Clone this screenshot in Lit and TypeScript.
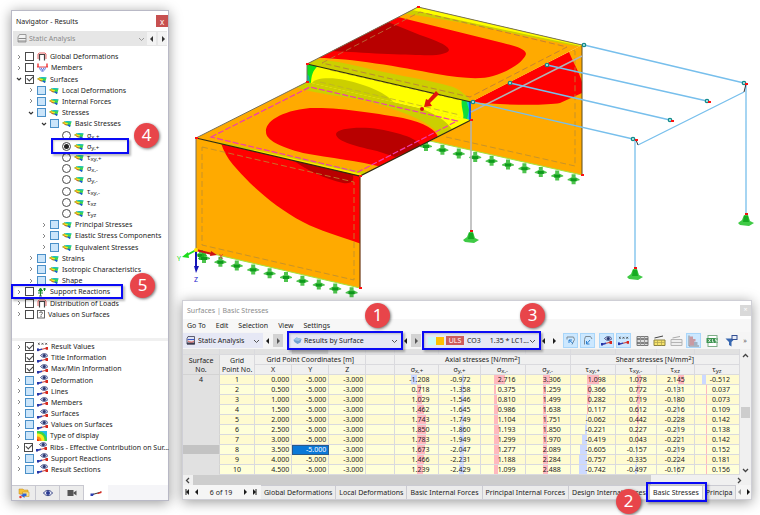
import { LitElement, html, svg, css, nothing, type TemplateResult } from "lit";
import { customElement, state } from "lit/decorators.js";
import { classMap } from "lit/directives/class-map.js";
import { styleMap } from "lit/directives/style-map.js";

const shared = css`
  * { box-sizing: border-box; }
  button, select, input {
    font: inherit;
    color: inherit;
    margin: 0;
    padding: 0;
    border: 0;
    background: none;
    border-radius: 0;
  }
  svg { display: block; flex: none; }
  .badge {
    position: absolute;
    z-index: 5;
    width: 25px;
    height: 25px;
    border-radius: 50%;
    background: #e8454a;
    color: #fff;
    font-size: 17px;
    line-height: 24px;
    text-align: center;
    box-shadow: 1px 1px 3px #0008;
  }
  .mark {
    position: absolute;
    z-index: 4;
    border: 2px solid #0a0af5;
    box-shadow: 2px 2px 2px #0004, inset 1px 1px 2px #0003;
    pointer-events: none;
  }
`;

/* ---------- icons ---------- */

const icons: Record<string, TemplateResult> = {
  surface: html`<svg width="10" height="9" viewBox="0 0 20 18">
    <path d="M0 8 6 4V6L10 4 19 5 18 9 16 16 11 13 6 12V11Z" fill="#3fd64a" />
    <path d="M6 4V6L10 4 19 5 18 7 8 6Z" fill="#17b8d8" /><path d="M0 8 6 5 7 11Z" fill="#f2a01e" />
    <path d="M5 7 12 8 11 11 6 10Z" fill="#f1e62a" /><path d="M4 10 9 11 11 13 6 12Z" fill="#ee3c1c" />
    <path d="M11 11 17 12 16 16 11 13Z" fill="#1c52e0" />
  </svg>`,
  frame: html`<svg width="10" height="9" viewBox="0 0 20 18">
    <path d="M5 17V5H15V17" fill="none" stroke="#444" stroke-width="2.4" />
    <path d="M2 14V4L5 2H16L18 4V14" fill="none" stroke="#d22" stroke-width="1.4" />
  </svg>`,
  members: html`<svg width="11" height="9" viewBox="0 0 22 18">
    <path d="M2 1V8M20 1V8" stroke="#e11" stroke-width="2.4" /><path d="M0 8H22" stroke="#e11" stroke-width="1.6" />
    <path d="M5 9C7 19 15 19 17 9M8 9 11 15 14 9" fill="none" stroke="#3a5ad6" stroke-width="1.6" />
  </svg>`,
  reactions: html`<svg width="10" height="10" viewBox="0 0 20 20">
    <path d="M7 17V4M3 8 7 2 11 8ZM2 12H12M15 8V2M12 4H18" stroke="#168a2b" fill="#168a2b" stroke-width="2" />
    <path d="M4 19H10L7 14Z" fill="#2a6b34" />
  </svg>`,
  query: html`<svg width="8" height="9" viewBox="0 0 16 18">
    <rect x="1" y="1" width="14" height="15" fill="#fff" stroke="#555" stroke-width="1.8" />
    <path d="M5 6C5 3 11 3 11 6 11 8 8 8 8 11M8 12V14" fill="none" stroke="#444" stroke-width="1.8" />
  </svg>`,
  eyeMember: html`<svg width="11" height="10" viewBox="0 0 22 20">
    <path d="M1 17 20 12" stroke="#c9463f" stroke-width="2.4" /><path d="M1 17 10 14.600" stroke="#2b42b5" stroke-width="3" />
    <rect x="0" y="14" width="4" height="5" fill="#2335a8" /><rect x="17" y="10" width="5" height="6" fill="#d9281e" />
    <path d="M7 5C11 0 18 0 22 5 18 10 11 10 7 5Z" fill="#c6cdea" stroke="#27356f" stroke-width="1.6" />
    <circle cx="14.500" cy="5" r="3" fill="#27356f" />
  </svg>`,
  valueMember: html`<svg width="11" height="10" viewBox="0 0 24 20">
    <path d="M2 17 22 12" stroke="#c9463f" stroke-width="2.4" /><path d="M2 17 11 14.600" stroke="#2b42b5" stroke-width="3" />
    <rect x="0" y="13" width="4" height="6" fill="#2335a8" /><rect x="19" y="10" width="5" height="6" fill="#d9281e" />
    <path d="M2 1 6 5M6 1 2 5M10 1 14 5M14 1 10 5M18 1 22 5M22 1 18 5" stroke="#333" stroke-width="1.6" />
  </svg>`,
  spectrum: html`<svg width="10" height="10" viewBox="0 0 20 20">
    <rect width="20" height="20" fill="#1fbfe8" /><path d="M0 0C12 0 20 8 20 20H0Z" fill="#3fd640" />
    <path d="M0 20V5C10 5 15 10 15 20Z" fill="#f5ef22" /><path d="M0 20V11C6 11 9 14 9 20Z" fill="#ff8a12" />
    <path d="M0 20V16C3 16 4 18 4 20Z" fill="#ef2a10" />
  </svg>`,
  analysis: html`<svg width="10" height="9" viewBox="0 0 20 18">
    <path d="M4 1H17V16H2V5Z" fill="#dfe3f2" stroke="#3c3c50" stroke-width="1.6" />
    <path d="M3 7H17" stroke="#3b57c4" stroke-width="2" /><path d="M2 13H18V17H2Z" fill="#3c3c50" />
    <path d="M4 10C8 13 13 13 16 10" fill="none" stroke="#d32" stroke-width="1.6" />
  </svg>`,
  analysisGrey: html`<svg width="10" height="9" viewBox="0 0 20 18">
    <path d="M5 1H18V16H2V6Z" fill="#f2f2f2" stroke="#888" stroke-width="1.6" />
    <path d="M3 9H18M2 14H18" stroke="#888" stroke-width="2" />
  </svg>`,
  project: html`<svg width="12" height="11" viewBox="0 0 24 22">
    <path d="M2 2H10L12 4H20V12H2Z" fill="#f6c33a" stroke="#c08a1c" />
    <path d="M9 8H22V17H9Z" fill="#ffe48c" stroke="#c08a1c" /><path d="M4 13 13 20V16H17V11H9V14Z" fill="#2e62d9" />
    <circle cx="5" cy="18" r="2.500" fill="#e33" />
  </svg>`,
  eye: html`<svg width="10" height="8" viewBox="0 0 20 16">
    <path d="M1 8C6 1 14 1 19 8 14 15 6 15 1 8Z" fill="#e9ecf8" stroke="#3a4686" stroke-width="2" />
    <circle cx="10" cy="8" r="4" fill="#2a3a92" />
  </svg>`,
  camera: html`<svg width="10" height="8" viewBox="0 0 20 16">
    <rect x="1" y="2" width="12" height="12" fill="#555" /><path d="M13 7 19 3V13L13 9Z" fill="#555" />
  </svg>`,
  member: html`<svg width="12" height="8" viewBox="0 0 24 16">
    <path d="M2 12 22 6" stroke="#333" stroke-width="2" /><path d="M1 14V9L8 9 6 14Z" fill="#2a3db2" /><path d="M14 9 23 4V8L16 10Z" fill="#d9281e" />
  </svg>`,
  layer: html`<svg width="9" height="8" viewBox="0 0 18 16">
    <path d="M1 6 7 1 17 4 15 11 9 14 3 10Z" fill="#6f9fd0" /><path d="M1 6 7 1 17 4 11 8Z" fill="#9cc3e6" />
  </svg>`,
  linkIn: html`<svg width="12" height="12" viewBox="0 0 24 24">
    <path d="M4 9V4H17L19 9 14 19" fill="none" stroke="#7d8a94" stroke-width="2" /><path d="M8 10 16 17M8 10V16M8 10H14" stroke="#2f80d0" stroke-width="2" fill="none" />
  </svg>`,
  linkOut: html`<svg width="12" height="12" viewBox="0 0 24 24">
    <path d="M20 8 17 3H7L5 9V19" fill="none" stroke="#7d8a94" stroke-width="2" /><path d="M16 10 9 18M9 12V18H15" stroke="#2f80d0" stroke-width="2" fill="none" />
  </svg>`,
  rows: html`<svg width="13" height="12" viewBox="0 0 26 24">
    <path d="M2 3H24V21H2Z" fill="#ddd" stroke="#777" stroke-width="2" /><path d="M2 8H24M2 16H24" stroke="#666" stroke-width="3" />
    <path d="M9 3V21M17 3V21" stroke="#999" stroke-width="2" />
  </svg>`,
  rowsYellow: html`<svg width="13" height="12" viewBox="0 0 26 24">
    <path d="M3 6 20 2" stroke="#444" stroke-width="2" /><path d="M2 10H24V21H2Z" fill="#f7e36a" stroke="#8a8140" stroke-width="2" />
    <path d="M2 15H24M9 10V21M17 10V21" stroke="#b3a650" stroke-width="1.500" />
  </svg>`,
  rowsPale: html`<svg width="13" height="12" viewBox="0 0 26 24">
    <path d="M5 6 20 3" stroke="#aaa" stroke-width="2" /><path d="M2 9H24V21H2Z" fill="#eee" stroke="#b5b5b5" stroke-width="2" />
    <path d="M2 15H24" stroke="#b5b5b5" stroke-width="2" />
  </svg>`,
  barChart: html`<svg width="13" height="12" viewBox="0 0 26 24">
    <path d="M4 1V22H24" stroke="#888" stroke-width="2" fill="none" />
    <path d="M5 3H12V8H5ZM5 8H17V13H5ZM5 13H14V21H5Z" fill="#c99aa2" /><path d="M14 14H21V21H14Z" fill="#9fb2c4" />
  </svg>`,
  excel: html`<svg width="13" height="12" viewBox="0 0 26 24">
    <rect x="4" y="1" width="18" height="22" fill="#fff" stroke="#7fae88" stroke-width="2" />
    <rect x="1" y="6" width="22" height="10" fill="#3d9450" /><path d="M5 8 9 14M9 8 5 14M13 8V14H16M22 8H19V11H22V14H19" stroke="#fff" stroke-width="1.400" fill="none" />
  </svg>`,
  filter: html`<svg width="13" height="12" viewBox="0 0 26 24">
    <path d="M1 7H20L13 14V23L8 20V14Z" fill="#3767b0" /><rect x="14" y="1" width="10" height="8" fill="#e8edf8" stroke="#334f93" stroke-width="2" />
  </svg>`,
};

const chevron = (open: boolean) => open
  ? html`<svg width="6" height="6" viewBox="0 0 6 6"><path d="M1 2 3 4 5 2" fill="none" stroke="#333" stroke-width="1.200" /></svg>`
  : html`<svg width="6" height="6" viewBox="0 0 6 6"><path d="M2 1 4 3 2 5" fill="none" stroke="#888" /></svg>`;

const arrow = (dir: "left" | "right", bar = false) => html`<svg width="6" height="6" viewBox="0 0 6 6">
  <path d=${dir === "left" ? "M4 0 1 3 4 6Z" : "M2 0 5 3 2 6Z"} fill="currentColor" />
  ${bar ? svg`<path d=${dir === "left" ? "M1 0V6" : "M5 0V6"} stroke="currentColor" />` : nothing}
</svg>`;

/* ---------- navigator ---------- */

type Check = "off" | "on" | "part" | "radio" | "radio-on";
interface Node {
  text: string;
  sub?: string;
  level: number;
  check: Check;
  icon: string;
  open?: boolean;
  leaf?: boolean;
  callout?: string;
}

const n = (level: number, text: string, check: Check, icon: string, more: Partial<Node> = {}): Node =>
  ({ level, text, check, icon, ...more });
const stress = (text: string, sub: string, more: Partial<Node> = {}) =>
  n(3, text, "radio", "surface", { sub, leaf: true, ...more });

const resultTree: Node[] = [
  n(0, "Global Deformations", "off", "frame"),
  n(0, "Members", "off", "members"),
  n(0, "Surfaces", "on", "surface", { open: true }),
  n(1, "Local Deformations", "part", "surface"),
  n(1, "Internal Forces", "part", "surface"),
  n(1, "Stresses", "part", "surface", { open: true }),
  n(2, "Basic Stresses", "part", "surface", { open: true }),
  stress("σ", "x,+"),
  stress("σ", "y,+", { check: "radio-on", callout: "4" }),
  stress("τ", "xy,+"),
  stress("σ", "x,-"),
  stress("σ", "y,-"),
  stress("τ", "xy,-"),
  stress("τ", "xz"),
  stress("τ", "yz"),
  n(2, "Principal Stresses", "part", "surface"),
  n(2, "Elastic Stress Components", "part", "surface"),
  n(2, "Equivalent Stresses", "part", "surface"),
  n(1, "Strains", "part", "surface"),
  n(1, "Isotropic Characteristics", "part", "surface"),
  n(1, "Shape", "part", "surface"),
  n(0, "Support Reactions", "off", "reactions", { callout: "5" }),
  n(0, "Distribution of Loads", "off", "frame"),
  n(0, "Values on Surfaces", "off", "query"),
];

const displayTree: Node[] = [
  n(0, "Result Values", "on", "valueMember"),
  n(0, "Title Information", "on", "eyeMember", { leaf: true }),
  n(0, "Max/Min Information", "on", "eyeMember", { leaf: true }),
  n(0, "Deformation", "part", "eyeMember"),
  n(0, "Lines", "part", "eyeMember"),
  n(0, "Members", "part", "eyeMember"),
  n(0, "Surfaces", "part", "eyeMember"),
  n(0, "Values on Surfaces", "part", "eyeMember"),
  n(0, "Type of display", "part", "spectrum"),
  n(0, "Ribs - Effective Contribution on Sur...", "on", "eyeMember"),
  n(0, "Support Reactions", "part", "eyeMember"),
  n(0, "Result Sections", "part", "eyeMember"),
];

@customElement("results-navigator")
export class ResultsNavigator extends LitElement {
  static styles = [shared, css`
    :host {
      display: flex;
      flex-direction: column;
      background: #fff;
      border: 1px solid #b9b9c6;
      box-shadow: 0 2px 12px #0006;
    }
    .title { display: flex; align-items: center; height: 20px; padding-left: 4px; }
    h1 { flex: 1; margin: 0; font-size: 7px; font-weight: 400; }
    .close { width: 12px; height: 12px; background: #c75050; color: #fff; font-size: 8px; line-height: 11px; }
    .picker { display: flex; align-items: center; height: 15px; margin: 0 1px; padding-left: 4px; background: #e6e6e6; color: #8a8a8a; gap: 2px; }
    .picker select { flex: 1; min-width: 0; appearance: none; opacity: 1; }
    .picker button { display: grid; place-items: center; width: 9px; height: 13px; background: #f3f3f3; color: #333; }
    ul { display: flex; flex-direction: column; list-style: none; margin: 0; padding: 0; }
    li { position: relative; display: flex; align-items: center; flex: 1 1 0; min-height: 11px; padding-left: 3px; }
    .level-1 { padding-left: 15px; }
    .level-2 { padding-left: 28px; }
    .level-3 { padding-left: 40px; }
    .main-tree { min-height: 269px; margin-top: 5px; }
    .split { height: 3px; margin-top: 18px; background: #f0f0f0; }
    .display-tree { min-height: 134px; }
    .twist { display: grid; place-items: center; width: 7px; height: 9px; margin-right: 3px; }
    .item { display: flex; align-items: center; gap: 3px; line-height: 11px; white-space: nowrap; }
    .item sub { font-size: 6px; line-height: 1; vertical-align: -1px; }
    input { appearance: none; display: grid; place-items: center; width: 9px; height: 9px; border: 1px solid #4a4a4a; background: #fff; }
    input.part { background: #cbe5fa; border-color: #4a90c8; }
    input.on::before { content: ""; width: 5px; height: 3px; border: solid #444; border-width: 0 0 1px 1px; transform: translateY(-1px) rotate(-45deg); }
    input[type="radio"] { border-radius: 50%; }
    input.radio-on::before { content: ""; width: 5px; height: 5px; border-radius: 50%; background: #222; }
    .tabs { display: flex; height: 15px; margin-top: 10px; background: #f5f5f8; }
    .tabs button { display: grid; place-items: center; flex: 0 0 24px; border: solid #c8c8d0; border-width: 1px 1px 0 0; background: #ececec; }
    .tabs .active { background: #fff; border-color: #fff; }
    .mark-4 { left: 39px; right: 39px; top: -3px; bottom: -2px; }
    .mark-5 { left: -1px; right: 45px; top: -2px; bottom: -2px; }
    .badge-4 { right: 9px; top: -18px; }
    .badge-5 { right: 13px; top: -13px; }
  `];

  private row = (node: Node) => {
    const radio = node.check.startsWith("radio");
    return html`<li class="level-${node.level}">
      ${node.leaf
        ? html`<span class="twist"></span>`
        : html`<button class="twist" aria-label="Expand ${node.text}">${chevron(!!node.open)}</button>`}
      <label class="item">
        <input class=${node.check} type=${radio ? "radio" : "checkbox"} name=${radio ? "stress" : nothing}
          .checked=${node.check.endsWith("on")} />
        ${icons[node.icon]}
        <span>${node.text}${node.sub ? html`<sub>${node.sub}</sub>` : nothing}</span>
      </label>
      ${node.callout
        ? html`<span class="mark mark-${node.callout}"></span><span class="badge badge-${node.callout}">${node.callout}</span>`
        : nothing}
    </li>`;
  };

  render() {
    return html`
      <header class="title"><h1>Navigator - Results</h1><button class="close" aria-label="Close navigator">x</button></header>
      <div class="picker">
        ${icons.analysisGrey}
        <select aria-label="Analysis type"><option>Static Analysis</option></select>
        <svg width="7" height="6" viewBox="0 0 7 6"><path d="M1 2 3.500 4.500 6 2" fill="none" stroke="#999" /></svg>
        <button aria-label="Previous analysis">${arrow("left")}</button>
        <button aria-label="Next analysis">${arrow("right")}</button>
      </div>
      <ul class="main-tree">${resultTree.map(this.row)}</ul>
      <div class="split"></div>
      <ul class="display-tree">${displayTree.map(this.row)}</ul>
      <nav class="tabs">
        <button aria-label="Data">${icons.project}</button>
        <button aria-label="Display">${icons.eye}</button>
        <button aria-label="Views">${icons.camera}</button>
        <button class="active" aria-label="Results">${icons.member}</button>
      </nav>`;
  }
}

/* ---------- model view ---------- */

@customElement("model-view")
export class ModelView extends LitElement {
  static styles = css`
    :host { display: block; }
    svg { display: block; width: 100%; height: auto; overflow: visible; }
    .axis { font-size: 7px; }
  `;

  private support = (x: number, y: number) => svg`<g transform="translate(${x} ${y})">
    <path d="M-2 -5H2V-2L6 0 6 1 2 2V5H-2V2L-6 1-6 0-2 -2Z" fill="#22b522" opacity=".8" />
    <path d="M-3 -1H3V2H-3Z" fill="#0e9a1c" /></g>`;

  private base = (x: number, y: number) => svg`<g transform="translate(${x} ${y})">
    <path d="M-2 -6H2L4 0 8 2 3 5-6 4-8 2-4 -1Z" fill="#3fca45" /><path d="M-2 -5H2L3 1H-3Z" fill="#16ab22" />
    <rect x="-1" y="-8" width="3" height="2" fill="#e11" /></g>`;

  private joint = (x: number, y: number) =>
    svg`<circle cx=${x} cy=${y} r="1.700" fill="#bfeeee" stroke="#138a8a" stroke-width="1.300" />`;

  private corner = (x: number, y: number) => svg`<rect x=${x - 1} y=${y - 1} width="3" height="2" fill="#f11" />`;

  render() {
    const front = Array.from({ length: 10 }, (_, i) => this.support(204 + 16.4 * i, 258 + 3.8 * i));
    const back = Array.from({ length: 10 }, (_, i) => this.support(426 + 16.4 * i, 146 + 3.7 * i));
    return html`<svg viewBox="182 0 570 300" role="img" aria-label="Surface stress model">
      <defs>
        <clipPath id="roofTop"><path d="M307 64 418 7 582 45 471 102Z" /></clipPath>
        <clipPath id="roofLow"><path d="M196 138 307 82 471 120 360 176Z" /></clipPath>
        <clipPath id="step"><path d="M307 64 471 102V120L307 82Z" /></clipPath>
        <clipPath id="wall"><path d="M196 138 360 176V288L196 250Z" /></clipPath>
      </defs>
      ${back}
      <path d="M471 102 582 45V175L430 141 471 120Z" fill="#ffaa00" />
      <path d="M471 102 569 52C575 66 580 74 582 82V93L560 103C545 106 500 105 471 102Z" fill="#f00" />
      <path d="M430 141 582 175" stroke="#a6e33c" />
      <path d="M582 45V175" stroke="#5b4a1e" />
      <path d="M565 47 575 51V166L446 137" fill="none" stroke="#b98d33" stroke-width=".8" stroke-dasharray="6 3" />

      <g clip-path="url(#roofTop)">
        <path d="M300 0H590V110H300Z" fill="#ffaa00" />
        <path d="M400 5 418 5 590 44V48L570 45C520 36 460 20 405 14Z" fill="#cccf00" />
        <path d="M416 6 590 46V48L412 10Z" fill="#ff0" />
        <path d="M318 58C350 58 400 67 437 74 460 78 480 80 493 76 512 70 524 61 526 54 526 49 515 46 503 43L398 17 300 40Z" fill="#f00" />
        <path d="M332 51C350 52 400 55 420 55 437 56 448 54 449 50 449 46 436 40 420 35L388 22 320 40Z" fill="#b80000" />
        <path d="M300 62 313 60C325 59 345 63 370 69 400 76 430 80 453 87 462 91 468 97 471 102L471 106 300 66Z" fill="#cccf00" />
        <path d="M322 63 420 12 567 47 470 97Z" fill="none" stroke="#b8773f" stroke-width=".8" stroke-dasharray="6 3" />
      </g>

      <g clip-path="url(#roofLow)">
        <path d="M190 75H475V180H190Z" fill="#ffaa00" />
        <path d="M296 87C310 93 350 97 370 102 395 109 425 119 437 132L440 140 475 120 307 80Z" fill="#cccf00" />
        <path d="M385 98C410 104 440 112 452 129L475 120 380 98Z" fill="#ff0" />
        <path d="M266 132C265 122 280 111 310 108 340 107 380 114 403 118 425 123 436 130 438 137L382 167C360 161 330 158 303 153 280 147 266 140 266 132Z" fill="#f00" />
        <path d="M336 134C337 129 352 127 370 128 395 131 418 138 421 146L395 157 377 151C360 147 336 142 336 134Z" fill="#b80000" />
        <path d="M225 143 360 171 370 172 360 178 196 140Z" fill="#cccf00" />
        <path d="M255 150 362 174 360 177 250 152Z" fill="#ffe800" />
        <path d="M211 137 310 87 457 121 358 172Z" fill="none" stroke="#f03cae" stroke-width="1.200" stroke-dasharray="6 2" />
      </g>

      <g clip-path="url(#step)">
        <path d="M300 60H475V125H300Z" fill="#ff0" />
        <path d="M305 62 318 66C313 70 311 76 311 84L305 84Z" fill="#0fe01a" /><path d="M305 72 309 76 310 84 305 84Z" fill="#12b5a0" />
        <path d="M312 84C312 78 330 77 345 80 368 85 388 94 394 103Z" fill="#cccf00" />
        <path d="M462 99H472V121H462C466 115 460 108 462 99Z" fill="#0fdc3c" /><path d="M466 100H472V121L467 119 469 110Z" fill="#10c5cc" />
        <path d="M470 101V121" stroke="#1758e0" stroke-width="2" />
        <path d="M330 70 460 100M320 82 460 115" stroke="#bcae2e" stroke-width=".8" stroke-dasharray="6 3" />
      </g>

      <g clip-path="url(#wall)">
        <path d="M190 130H365V290H190Z" fill="#ffaa00" />
        <path d="M221 143C226 160 238 170 250 183 265 197 282 211 303 222 320 231 340 236 361 244V170Z" fill="#f00" />
        <path d="M294 161C305 169 325 179 343 183 352 184 354 181 353 174Z" fill="#b80000" />
        <path d="M202 147 354 182V280L202 245Z" fill="none" stroke="#b98d33" stroke-width=".8" stroke-dasharray="6 3" />
      </g>

      <path d="M196 250V138L307 82V64L418 7 582 45" fill="none" stroke="#77705a" />
      <path d="M196 138 360 176 471 120M307 64 471 102" fill="none" stroke="#2f2a10" stroke-width="1.200" />
      <path d="M360 176V288" stroke="#6b3510" stroke-width="1.200" />
      <path d="M196 250 360 288" stroke="#a6e33c" />
      ${this.support(201, 255)} ${front}

      <path d="M471 112 582 56M471 120V232" stroke="#b3b3b3" stroke-width="1.500" fill="none" />
      <path d="M584 45 744 83M547 65 707 101M510 83 670 120M473 102 633 139M746 84V214M635 141V267M638 145 744 92" stroke="#77bfec" stroke-width="1.300" fill="none" />
      <path d="M636 140 638 145M746 84 744 92" stroke="#333" />
      ${this.base(471, 238)} ${this.base(746, 221)} ${this.base(635, 275)}
      ${[[584, 45], [744, 83], [707, 101], [670, 120], [633, 139], [473, 102], [510, 83], [547, 65]].map(([x, y]) => this.joint(x, y))}
      ${[[196, 138], [307, 64], [307, 82], [418, 7], [360, 176], [360, 288], [582, 175], [471, 120], [746, 84], [709, 102], [672, 121], [636, 140]].map(([x, y]) => this.corner(x, y))}

      <path d="M436 91 439 94 430 103 432 106 424 107 426 99 428 100Z" fill="#e3140e" /><circle cx="422" cy="109" r="2" fill="#d81010" />

      <path d="M196 250 212 254" stroke="#c11" stroke-width="2" /><path d="M211 251 217 255 210 256Z" fill="#c11" />
      <path d="M196 250 187 255" stroke="#1bdc1b" stroke-width="2" /><path d="M188 252 182 257 189 258Z" fill="#1bdc1b" />
      <path d="M196 250V268" stroke="#1414b8" stroke-width="2" /><path d="M194 266H199L196 273Z" fill="#1414b8" />
      <circle cx="196" cy="250" r="2" fill="#ffe600" />
      <text class="axis" x="219" y="259" fill="#e22">X</text>
      <text class="axis" x="177" y="261" fill="#1bdc1b">Y</text>
      <text class="axis" x="194" y="282" fill="#2222cc">Z</text>
    </svg>`;
  }
}

/* ---------- result table ---------- */

/* Each stress column has a zero line (px from the cell's left) and a scale (px per unit). */
const columns = [
  { sign: "σ", sub: "x,+", zero: 22, scale: 5 },
  { sign: "σ", sub: "y,+", zero: 25, scale: 2 },
  { sign: "σ", sub: "x,-", zero: 13, scale: 4 },
  { sign: "σ", sub: "y,-", zero: 17, scale: 2 },
  { sign: "τ", sub: "xy,+", zero: 16, scale: 11 },
  { sign: "τ", sub: "xy,-", zero: 21, scale: 4 },
  { sign: "τ", sub: "xz", zero: 21, scale: 3 },
  { sign: "τ", sub: "yz", zero: 11, scale: 8 },
];

const grid: [string, string[]][] = [
  ["0.000", ["-1.208", "-0.972", "2.716", "3.306", "1.098", "1.078", "2.145", "-0.512"]],
  ["0.500", ["0.718", "-1.358", "0.375", "1.259", "0.366", "0.772", "-0.131", "0.037"]],
  ["1.000", ["1.029", "-1.546", "0.810", "1.499", "0.282", "0.719", "-0.180", "0.073"]],
  ["1.500", ["1.462", "-1.645", "0.986", "1.638", "0.117", "0.612", "-0.216", "0.109"]],
  ["2.000", ["1.743", "-1.749", "1.104", "1.751", "-0.062", "0.442", "-0.228", "0.142"]],
  ["2.500", ["1.850", "-1.860", "1.193", "1.850", "-0.221", "0.227", "-0.219", "0.138"]],
  ["3.000", ["1.783", "-1.949", "1.299", "1.970", "-0.419", "0.043", "-0.221", "0.142"]],
  ["3.500", ["1.673", "-2.047", "1.277", "2.089", "-0.605", "-0.157", "-0.219", "0.152"]],
  ["4.000", ["1.466", "-2.231", "1.188", "2.284", "-0.757", "-0.335", "-0.224", "0.181"]],
  ["4.500", ["1.239", "-2.429", "1.099", "2.488", "-0.742", "-0.497", "-0.167", "0.156"]],
];

const sheetTabs = ["Global Deformations", "Local Deformations", "Basic Internal Forces", "Principal Internal Forces",
  "Design Internal Forces", "Basic Stresses", "Principa"];

@customElement("result-table")
export class ResultTable extends LitElement {
  @state() private selectedRow = 7;

  static styles = [shared, css`
    :host {
      position: relative;
      display: flex;
      flex-direction: column;
      background: #f5f5f5;
      border: 1px solid #cfcfd6;
      box-shadow: 0 2px 12px #0006;
    }
    .title { display: flex; align-items: center; height: 18px; padding-left: 4px; background: #fff; color: #8c8c8c; }
    h2 { flex: 1; margin: 0; font-size: 7px; font-weight: 400; }
    .close { width: 11px; height: 11px; background: #d9d9d9; color: #fff; line-height: 10px; }
    .menu { display: flex; gap: 10px; height: 13px; padding-left: 4px; background: #f7f7f7; }
    .toolbar { display: flex; align-items: center; height: 17px; background: #f5f5f5; }
    .combo { position: relative; display: flex; align-items: center; gap: 2px; height: 15px; padding: 0 3px; background: #e6e8f5; }
    .combo select { flex: 1; min-width: 0; appearance: none; white-space: pre; }
    .analysis { flex: 0 0 80px; }
    .by-surface { flex: 0 0 112px; margin-left: 6px; padding-left: 4px; }
    .load { flex: 0 0 112px; margin-left: 3px; padding-left: 4px; gap: 0; }
    .swatch { width: 8px; height: 8px; background: #c8fbfb; }
    .swatch.gold { background: #ffc000; }
    .uls { width: 18px; height: 9px; margin: 0 3px 0 2px; background: #cd5c5c; color: #fff; line-height: 9px; text-align: center; }
    .step { display: grid; place-items: center; width: 10px; height: 13px; }
    .step.dim { background: #d3d3d3; color: #555; }
    .tools { display: flex; flex: 1; align-items: center; justify-content: space-between; min-width: 0; padding: 0 2px 0 4px; }
    .tools button { display: grid; place-items: center; width: 15px; height: 15px; }
    .tools .on { background: #cce8ff; outline: 1px solid #a9d6fa; outline-offset: -1px; }
    .tools .more { width: 8px; color: #666; }
    .pane { display: grid; grid-template-columns: 1fr 11px; }
    table { width: 100%; table-layout: fixed; border-collapse: separate; border-spacing: 0; }
    th, td { padding: 0; font-weight: 400; line-height: 9px; border: solid #dadade; border-width: 0 1px 1px 0; white-space: nowrap; }
    thead th { height: 10px; background: #f0f0f0; text-align: center; }
    thead .band th { height: 6px; background: #e1e1e1; line-height: 5px; }
    thead .band .current { background: #c8c8c8; }
    thead .corner, tbody th { background: #e1e1e1; border-color: #d3d3d3; }
    tbody th { border-bottom-color: #e1e1e1; text-align: center; }
    tbody th.current { background: #c3c3c3; }
    tbody td { position: relative; height: 10px; background: #ffffd9; text-align: right; }
    tbody tr:nth-child(odd) td { background: #fffbd0; }
    tbody .number { text-align: center; }
    tbody .coord { padding-right: 2px; }
    tbody .selected, tbody tr:nth-child(odd) .selected { background: #0a78d7; color: #fff; outline: 1px solid #2a5a8a; outline-offset: -1px; }
    tbody .stress { padding-right: 9px; }
    .stress span { position: relative; }
    .stress .bar { position: absolute; top: 0; bottom: 0; background: #ffb9bf; }
    .stress .bar.negative { background: #ccd9ff; }
    sub { font-size: 6px; line-height: 1; vertical-align: -1px; }
    sup { font-size: 6px; line-height: 1; vertical-align: 2px; }
    .vscroll { display: grid; grid-template-rows: 11px 1fr 11px; justify-items: center; align-items: center; padding-top: 1px; background: #f0f0f0; }
    .thumb { width: 9px; height: 11px; background: #cdcdcd; }
    .hscroll { display: grid; grid-template-columns: 10px 1fr 24px; height: 10px; align-items: center; justify-items: center; background: #f0f0f0; }
    .track { justify-self: stretch; align-self: stretch; margin-right: 76px; background: #cdcdcd; }
    .sheets { position: relative; display: flex; height: 14px; background: #f5f5f5; }
    .pager { display: flex; flex: 0 0 78px; align-items: center; justify-content: space-between; padding: 0 4px 0 2px; }
    .pager .count { margin: 0 6px; }
    .strip { display: flex; flex: 1; min-width: 0; overflow: hidden; }
    .strip button { position: relative; flex: none; padding: 0 3px; background: #ececec; border: solid #cbcbd2; border-width: 1px 1px 0 0; white-space: nowrap; }
    .strip .active { background: #fff; }
    .ends { display: flex; flex: 0 0 14px; align-items: center; justify-content: space-between; color: #111; }
    .ends .dim { color: #999; }
    .mark-1, .mark-3 { inset: -2px; }
    .mark-2 { right: 44px; width: 61px; top: -3px; height: 20px; }
    .badge-1 { right: 11px; top: -30px; }
    .badge-3 { right: -6px; top: -30px; }
    .badge-2 { right: 110px; top: 4px; }
  `];

  private drop = html`<svg width="7" height="6" viewBox="0 0 7 6"><path d="M1 2 3.500 4.500 6 2" fill="none" stroke="#555" /></svg>`;

  private step = (dir: "left" | "right", dim = false) =>
    html`<button class=${classMap({ step: true, dim })} aria-label=${dir === "left" ? "Previous" : "Next"}>${arrow(dir)}</button>`;

  private tool = (icon: string, on = false) =>
    html`<button class=${classMap({ on })} aria-label=${icon}>${icons[icon]}</button>`;

  private stressCell = (value: string, i: number) => {
    const { zero, scale } = columns[i];
    const v = Number(value);
    const width = Math.max(1, Math.round(Math.abs(v) * scale));
    const left = v < 0 ? zero - width : zero;
    return html`<td class="stress"><i class=${classMap({ bar: true, negative: v < 0 })}
      style=${styleMap({ left: `${left}px`, width: `${width}px` })}></i><span>${value}</span></td>`;
  };

  render() {
    const widths = [37, 35, 37, 37, 37, 29, 44, 41, 45, 45, 45, 41, 38, 45];
    const total = widths.reduce((a, b) => a + b, 0);
    return html`
      <header class="title"><h2>Surfaces | Basic Stresses</h2><button class="close" aria-label="Close table">×</button></header>
      <nav class="menu">${["Go To", "Edit", "Selection", "View", "Settings"].map((m) => html`<button>${m}</button>`)}</nav>
      <div class="toolbar">
        <div class="combo analysis">${icons.analysis}<select aria-label="Analysis type"><option>Static Analysis</option></select>${this.drop}</div>
        ${this.step("left")}${this.step("right", true)}
        <div class="combo by-surface">${icons.layer}<select aria-label="Result listing"><option>Results by Surface</option></select>${this.drop}
          <span class="mark mark-1"></span><span class="badge badge-1">1</span></div>
        ${this.step("left")}${this.step("right", true)}
        <div class="combo load"><i class="swatch"></i><i class="swatch gold"></i><span class="uls">ULS</span>
          <select aria-label="Load combination"><option>CO3&nbsp;&nbsp;&nbsp;&nbsp;&nbsp;1.35 * LC1...</option></select>${this.drop}
          <span class="mark mark-3"></span><span class="badge badge-3">3</span></div>
        ${this.step("left")}${this.step("right")}
        <div class="tools">
          ${this.tool("linkIn", true)}${this.tool("linkOut", true)}
          <span></span>
          ${this.tool("eyeMember", true)}${this.tool("valueMember", true)}
          <span></span>
          ${this.tool("rows")}${this.tool("rowsYellow")}${this.tool("rowsPale")}${this.tool("barChart", true)}
          <span></span>
          ${this.tool("excel")}
          <span></span>
          ${this.tool("filter")}<button class="more" aria-label="More tools">»</button>
        </div>
      </div>
      <div class="pane">
        <table>
          <colgroup>${widths.map((w) => html`<col style=${styleMap({ width: `${(w / total) * 100}%` })} />`)}</colgroup>
          <thead>
            <tr class="band">${widths.map((_, i) => html`<th class=${classMap({ current: i === 3 })}></th>`)}</tr>
            <tr>
              <th class="corner" rowspan="2">Surface<br />No.</th><th rowspan="2">Grid<br />Point No.</th>
              <th colspan="3">Grid Point Coordinates [m]</th><th></th>
              <th colspan="4">Axial stresses [N/mm<sup>2</sup>]</th><th colspan="4">Shear stresses [N/mm<sup>2</sup>]</th>
            </tr>
            <tr><th>X</th><th>Y</th><th>Z</th><th></th>${columns.map((c) => html`<th>${c.sign}<sub>${c.sub}</sub></th>`)}</tr>
          </thead>
          <tbody>
            ${grid.map(([x, values], r) => html`<tr @click=${() => (this.selectedRow = r)}>
              <th class=${classMap({ current: r === this.selectedRow })}>${r === 0 ? "4" : ""}</th>
              <td class="number">${r + 1}</td>
              <td class="coord">${x}</td>
              <td class=${classMap({ coord: true, selected: r === this.selectedRow })}>-5.000</td>
              <td class="coord">-3.000</td>
              <td></td>
              ${values.map(this.stressCell)}
            </tr>`)}
          </tbody>
        </table>
        <div class="vscroll">
          <svg width="7" height="6" viewBox="0 0 7 6"><path d="M1 4 3.500 1.500 6 4" fill="none" stroke="#444" stroke-width="1.300" /></svg>
          <i class="thumb"></i>
          <svg width="7" height="6" viewBox="0 0 7 6"><path d="M1 2 3.500 4.500 6 2" fill="none" stroke="#444" stroke-width="1.300" /></svg>
        </div>
      </div>
      <div class="hscroll">
        <svg width="6" height="7" viewBox="0 0 6 7"><path d="M4 1 1.500 3.500 4 6" fill="none" stroke="#444" stroke-width="1.300" /></svg>
        <i class="track"></i>
        <svg width="6" height="7" viewBox="0 0 6 7"><path d="M2 1 4.500 3.500 2 6" fill="none" stroke="#444" stroke-width="1.300" /></svg>
      </div>
      <div class="sheets">
        <div class="pager">
          <button aria-label="First table">${arrow("left", true)}</button><button aria-label="Previous table">${arrow("left")}</button>
          <span class="count">6 of 19</span>
          <button aria-label="Next table">${arrow("right")}</button><button aria-label="Last table">${arrow("right", true)}</button>
        </div>
        <div class="strip">${sheetTabs.map((t) => html`<button class=${classMap({ active: t === "Basic Stresses" })}>${t}</button>`)}</div>
        <div class="ends"><button class="dim" aria-label="Scroll tabs left">${arrow("left")}</button><button aria-label="Scroll tabs right">${arrow("right")}</button></div>
        <span class="mark mark-2"></span><span class="badge badge-2">2</span>
      </div>`;
  }
}

@customElement("app-root")
export class AppRoot extends LitElement {
  static styles = css`
    :host {
      display: grid;
      grid-template-columns: 158px minmax(0, 1fr);
      gap: 13px;
      align-items: start;
      box-sizing: border-box;
      min-height: 100vh;
      padding: 0 8px 0 11px;
      overflow: hidden;
      background: #fff;
      color: #1c1c1c;
      font: 7px/11px "Noto Sans", "Open Sans", sans-serif;
    }
    results-navigator { margin-top: 10px; }
  `;

  render() {
    return html`<results-navigator></results-navigator>
      <main><model-view></model-view><result-table></result-table></main>`;
  }
}
